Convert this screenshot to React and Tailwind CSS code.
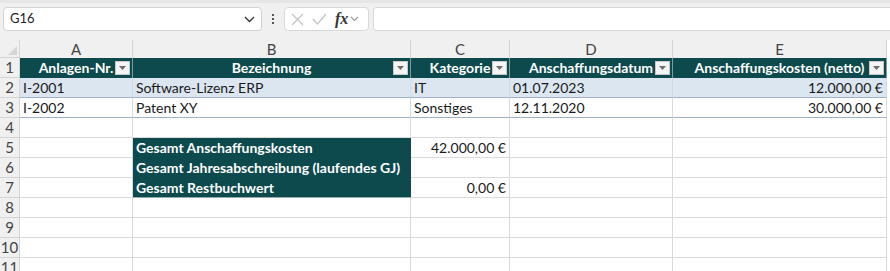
import React from 'react'

const cols = ['A', 'B', 'C', 'D', 'E']
const font = { fontFamily: 'Lato, "Liberation Sans", sans-serif' }

function Filter() {
  return (
    <span className="absolute right-[2px] top-[3px] w-[15px] h-[14px] bg-[#f4f4f4] border border-[#c8c8c8] flex items-center justify-center">
      <svg width="7" height="4" viewBox="0 0 7 4"><path d="M0 0h7L3.5 4z" fill="#6b6b6b" /></svg>
    </span>
  )
}

function Head({ children }) {
  return (
    <div className="relative h-[20px] bg-[#0c4a4d] border-r border-[#7a9c9d] text-white font-bold flex items-center justify-center leading-none whitespace-nowrap">
      {children}
      <Filter />
    </div>
  )
}

function Cell({ children, right, className = '' }) {
  return (
    <div className={`h-[20px] border-r border-b border-[#dadada] flex items-center px-[3px] whitespace-nowrap overflow-visible leading-none text-[#1a1a1a] ${right ? 'justify-end' : ''} ${className}`}>
      {children}
    </div>
  )
}

function RowNum({ n }) {
  return (
    <div className="h-[20px] bg-[#f0f0f0] border-r border-b border-[#d4d4d4] flex items-center justify-center text-[#444] text-[15px] leading-none">
      {n}
    </div>
  )
}

export default function App() {
  const rows = [
    ['I-2001', 'Software-Lizenz ERP', 'IT', '01.07.2023', '12.000,00 €'],
    ['I-2002', 'Patent XY', 'Sonstiges', '12.11.2020', '30.000,00 €'],
  ]
  const sums = [
    ['Gesamt Anschaffungskosten', '42.000,00 €'],
    ['Gesamt Jahresabschreibung (laufendes GJ)', ''],
    ['Gesamt Restbuchwert', '0,00 €'],
  ]
  return (
    <div className="w-[890px] h-[271px] overflow-hidden bg-[#f0f0f0] text-[14px]" style={font}>
      {/* formula bar */}
      <div className="h-[40px] border-t-[3px] border-[#e6e6e6] flex items-start pt-[4px] pl-[3px]">
        <div className="w-[259px] h-[24px] bg-white border border-[#d2d2d2] rounded-[4px] flex items-center justify-between pl-[6px] pr-[6px] text-[13px] text-[#222]">
          <span>G16</span>
          <svg width="11" height="7" viewBox="0 0 11 7"><path d="M1 1l4.5 4.5L10 1" stroke="#333" strokeWidth="1.4" fill="none" /></svg>
        </div>
        <div className="w-[22px] h-[24px] flex flex-col items-center justify-center gap-[2px]">
          <span className="w-[2px] h-[2px] bg-[#555]" />
          <span className="w-[2px] h-[2px] bg-[#555]" />
          <span className="w-[2px] h-[2px] bg-[#555]" />
        </div>
        <div className="w-[85px] h-[24px] bg-white border border-[#d8d8d8] rounded-[4px] flex items-center pl-[6px] gap-[8px]">
          <svg width="13" height="13" viewBox="0 0 13 13"><path d="M1 1l11 11M12 1L1 12" stroke="#c4c4c4" strokeWidth="1.3" /></svg>
          <svg width="15" height="12" viewBox="0 0 15 12"><path d="M1 6l4.5 5L14 1" stroke="#c4c4c4" strokeWidth="1.3" fill="none" /></svg>
          <span className="flex items-center gap-[2px]">
            <span className="italic font-bold text-[16px] text-[#333] leading-none" style={{ fontFamily: '"Liberation Serif", serif' }}>fx</span>
            <svg width="9" height="6" viewBox="0 0 9 6"><path d="M1 1l3.5 3.5L8 1" stroke="#999" strokeWidth="1.1" fill="none" /></svg>
          </span>
        </div>
        <div className="ml-[4px] flex-1 h-[24px] bg-white border border-[#d8d8d8] rounded-l-[4px] border-r-0" />
      </div>

      {/* sheet */}
      <div className="grid grid-cols-[20px_113px_278px_99px_163px_214px] bg-white">
        {/* column headers */}
        <div className="h-[18px] bg-[#f0f0f0] border-r border-b border-[#d4d4d4] relative">
          <svg className="absolute right-[2px] bottom-[2px]" width="9" height="9" viewBox="0 0 9 9"><path d="M9 0v9H0z" fill="#d6d6d6" /></svg>
        </div>
        {cols.map(c => (
          <div key={c} className="h-[18px] bg-[#f0f0f0] border-r border-[#d4d4d4] flex items-center justify-center text-[#444] text-[15px] leading-none">
            {c}
          </div>
        ))}

        {/* row 1 */}
        <RowNum n={1} />
        <Head>Anlagen-Nr.</Head>
        <Head>Bezeichnung</Head>
        <Head>Kategorie</Head>
        <Head>Anschaffungsdatum</Head>
        <Head>Anschaffungskosten (netto)</Head>

        {/* data rows */}
        {rows.map((r, i) => (
          <React.Fragment key={i}>
            <RowNum n={i + 2} />
            {r.map((v, j) => (
              <Cell key={j} right={j === 4}
                className={`${i === 0 ? 'bg-[#dce6f1] border-r-[#d0dae6]' : ''} border-b-[#9fb2c8]`}>
                {v}
              </Cell>
            ))}
          </React.Fragment>
        ))}

        {/* row 4 */}
        <RowNum n={4} />
        <Cell /><Cell /><Cell /><Cell /><Cell />

        {/* summary */}
        {sums.map(([label, val], i) => (
          <React.Fragment key={i}>
            <RowNum n={i + 5} />
            <Cell />
            <div className={`h-[20px] bg-[#0c4a4d] flex items-center px-[3px] text-white font-bold whitespace-nowrap leading-none ${i === 2 ? 'border-b border-[#9aa]' : ''}`}>
              {label}
            </div>
            <Cell right>{val}</Cell>
            <Cell />
            <Cell />
          </React.Fragment>
        ))}

        {[8, 9, 10, 11].map(n => (
          <React.Fragment key={n}>
            <RowNum n={n} />
            <Cell /><Cell /><Cell /><Cell /><Cell />
          </React.Fragment>
        ))}
      </div>
    </div>
  )
}
